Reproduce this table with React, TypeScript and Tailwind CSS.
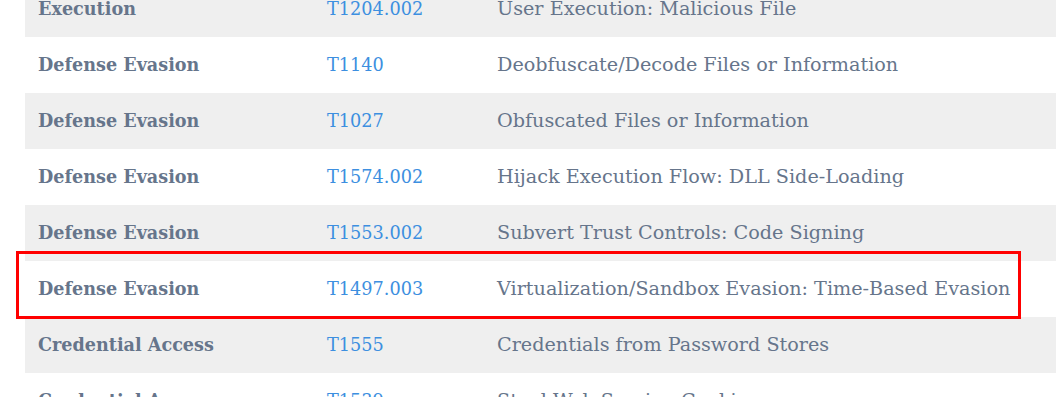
import React from "react";

const rows: [string, string, string][] = [
  ["Execution", "T1204.002", "User Execution: Malicious File"],
  ["Defense Evasion", "T1140", "Deobfuscate/Decode Files or Information"],
  ["Defense Evasion", "T1027", "Obfuscated Files or Information"],
  ["Defense Evasion", "T1574.002", "Hijack Execution Flow: DLL Side-Loading"],
  ["Defense Evasion", "T1553.002", "Subvert Trust Controls: Code Signing"],
  ["Defense Evasion", "T1497.003", "Virtualization/Sandbox Evasion: Time-Based Evasion"],
  ["Credential Access", "T1555", "Credentials from Password Stores"],
  ["Credential Access", "T1539", "Steal Web Session Cookie"],
];

export default function App() {
  return (
    <div className="relative w-[1056px] h-[397px] overflow-hidden bg-white" style={{ fontFamily: '"DejaVu Serif", serif' }}>
      <div className="mt-[-19px] ml-[25px] w-[1100px]">
        {rows.map((r, i) => (
          <div key={i} className={`flex h-[56px] items-center whitespace-nowrap ${i % 2 === 0 ? "bg-[#efefef]" : "bg-white"}`}>
            <div className="w-[289px] pl-[13px] text-[17.6px] font-bold text-[#66758b]">{r[0]}</div>
            <div className="w-[170px] pl-[13px] text-[17.7px] text-[#3d8fe0]">{r[1]}</div>
            <div className="flex-1 pl-[13px] text-[19.2px] text-[#66758b]">{r[2]}</div>
          </div>
        ))}
      </div>
      <div className="absolute left-[16px] top-[251px] w-[1005px] h-[68px] border-[3px] border-[#ff0000]" />
    </div>
  );
}
